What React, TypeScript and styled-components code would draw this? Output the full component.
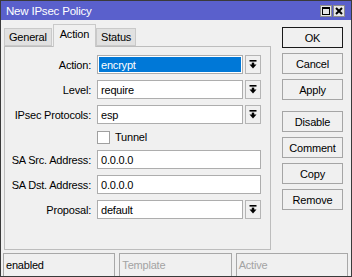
import React from 'react';
import styled, { createGlobalStyle } from 'styled-components';

const GlobalStyle = createGlobalStyle`
	html, body {
		margin: 0;
		padding: 0;
		background: #f0f0f0;
	}
	body {
		font-family: 'Liberation Sans', Arial, sans-serif;
		font-size: 11px;
		letter-spacing: -0.2px;
		color: #000;
	}
`;

const Window = styled.div`
	width: 352px;
	height: 277px;
	box-sizing: border-box;
	border: 1px solid #3a3a3a;
	background: #f0f0f0;
	display: flex;
	flex-direction: column;
`;

const TitleBar = styled.div`
	height: 19px;
	flex: none;
	background: #5a60cc;
	display: flex;
	align-items: center;
	justify-content: space-between;
	padding: 0 6px 0 5px;
	color: #fff;
	font-size: 11.5px;
`;

const TitleButtons = styled.div`
	display: flex;
	gap: 1px;
`;

const TitleButton = styled.div`
	width: 12px;
	height: 12px;
	box-sizing: border-box;
	background: #e6e6e6;
	border: 1px solid #8c8c8c;
	display: flex;
	align-items: center;
	justify-content: center;
`;

const Main = styled.div`
	flex: 1;
	display: flex;
	min-height: 0;
`;

const LeftColumn = styled.div`
	width: 267px;
	margin-left: 3px;
	display: flex;
	flex-direction: column;
`;

const TabRow = styled.div`
	display: flex;
	align-items: flex-end;
	height: 22px;
	margin-top: 4px;
	position: relative;
	z-index: 1;
`;

const Tab = styled.div<{ $active?: boolean }>`
	box-sizing: border-box;
	height: ${(p) => (p.$active ? '23px' : '18px')};
	margin-bottom: ${(p) => (p.$active ? '-1px' : '0')};
	padding: ${(p) => (p.$active ? '3px 6px 0' : '2px 4px 0')};
	background: ${(p) => (p.$active ? '#f0f0f0' : '#e1e1e1')};
	border: 1px solid #c9c9c9;
	border-bottom: ${(p) => (p.$active ? 'none' : '1px solid #c9c9c9')};
	margin-right: ${(p) => (p.$active ? '0' : '1px')};
	display: flex;
	align-items: flex-start;
`;

const Panel = styled.div`
	flex: 1;
	box-sizing: border-box;
	border: 1px solid #bdbdbd;
	background: #f0f0f0;
	padding: 8px 0 0 0;
`;

const Form = styled.div`
	display: grid;
	grid-template-columns: 86px 164px;
	column-gap: 6px;
	row-gap: 6px;
	align-items: center;
`;

const Label = styled.div`
	text-align: right;
	white-space: nowrap;
`;

const FieldRow = styled.div`
	display: flex;
	gap: 2px;
	height: 19px;
`;

const Input = styled.div<{ $selected?: boolean }>`
	flex: 1;
	box-sizing: border-box;
	height: 19px;
	border: 1px solid #adadad;
	background: ${(p) => (p.$selected ? '#0078d7' : '#fff')};
	box-shadow: ${(p) => (p.$selected ? 'inset 0 0 0 1px #fff' : 'none')};
	color: ${(p) => (p.$selected ? '#fff' : '#000')};
	padding: 0 3px;
	display: flex;
	align-items: center;
`;

const ArrowButton = styled.div`
	width: 16px;
	flex: none;
	box-sizing: border-box;
	border: 1px solid #b5b5b5;
	background: #f0f0f0;
	display: flex;
	align-items: center;
	justify-content: center;
`;

const CheckRow = styled.label`
	grid-column: 2;
	display: flex;
	align-items: center;
	gap: 5px;
	height: 14px;
`;

const CheckBox = styled.span`
	width: 13px;
	height: 13px;
	box-sizing: border-box;
	border: 1px solid #a0a0a0;
	background: #fff;
`;

const RightColumn = styled.div`
	width: 61px;
	margin-left: 11px;
	padding-top: 7px;
	display: flex;
	flex-direction: column;
	gap: 5px;
`;

const Button = styled.div<{ $default?: boolean; $spaced?: boolean }>`
	height: 21px;
	box-sizing: border-box;
	border: 1px solid ${(p) => (p.$default ? '#1a1a1a' : '#a5a5a5')};
	background: #f0f0f0;
	display: flex;
	align-items: center;
	justify-content: center;
	margin-top: ${(p) => (p.$spaced ? '6px' : '0')};
`;

const StatusBar = styled.div`
	height: 23px;
	flex: none;
	margin-top: 3px;
	padding: 0 3px 0 2px;
	display: flex;
	gap: 4px;
`;

const StatusField = styled.div<{ $muted?: boolean }>`
	flex: 1;
	box-sizing: border-box;
	border: 1px solid #a8a8a8;
	border-bottom: none;
	padding: 0 2px;
	display: flex;
	align-items: center;
	color: ${(p) => (p.$muted ? '#a3a3a3' : '#000')};
`;

const DropIcon = () => (
	<svg width="8" height="9" viewBox="0 0 8 9">
		<rect x="0.5" y="0" width="7" height="1.6" fill="#000" />
		<rect x="2.8" y="2.6" width="2.4" height="2.4" fill="#000" />
		<polygon points="0.5,4.6 7.5,4.6 4,8.4" fill="#000" />
	</svg>
);

const MaxIcon = () => (
	<svg width="8" height="8" viewBox="0 0 8 8">
		<rect x="0.5" y="0.5" width="7" height="7" fill="none" stroke="#000" />
		<rect x="0" y="0" width="8" height="2" fill="#000" />
	</svg>
);

const CloseIcon = () => (
	<svg width="8" height="8" viewBox="0 0 8 8">
		<path d="M1 1 L7 7 M7 1 L1 7" stroke="#000" strokeWidth="2" />
	</svg>
);

const Select: React.FC<{ value: string; selected?: boolean }> = ({ value, selected }) => (
	<FieldRow>
		<Input $selected={selected}>{value}</Input>
		<ArrowButton>
			<DropIcon />
		</ArrowButton>
	</FieldRow>
);

const App: React.FC = () => (
	<>
		<GlobalStyle />
		<Window>
			<TitleBar>
				<span>New IPsec Policy</span>
				<TitleButtons>
					<TitleButton>
						<MaxIcon />
					</TitleButton>
					<TitleButton>
						<CloseIcon />
					</TitleButton>
				</TitleButtons>
			</TitleBar>
			<Main>
				<LeftColumn>
					<TabRow>
						<Tab>General</Tab>
						<Tab $active>Action</Tab>
						<Tab>Status</Tab>
					</TabRow>
					<Panel>
						<Form>
							<Label>Action:</Label>
							<Select value="encrypt" selected />
							<Label>Level:</Label>
							<Select value="require" />
							<Label>IPsec Protocols:</Label>
							<Select value="esp" />
							<CheckRow>
								<CheckBox />
								Tunnel
							</CheckRow>
							<Label>SA Src. Address:</Label>
							<FieldRow>
								<Input>0.0.0.0</Input>
							</FieldRow>
							<Label>SA Dst. Address:</Label>
							<FieldRow>
								<Input>0.0.0.0</Input>
							</FieldRow>
							<Label>Proposal:</Label>
							<Select value="default" />
						</Form>
					</Panel>
				</LeftColumn>
				<RightColumn>
					<Button $default>OK</Button>
					<Button>Cancel</Button>
					<Button>Apply</Button>
					<Button $spaced>Disable</Button>
					<Button>Comment</Button>
					<Button>Copy</Button>
					<Button>Remove</Button>
				</RightColumn>
			</Main>
			<StatusBar>
				<StatusField>enabled</StatusField>
				<StatusField $muted>Template</StatusField>
				<StatusField $muted>Active</StatusField>
			</StatusBar>
		</Window>
	</>
);

export default App;
